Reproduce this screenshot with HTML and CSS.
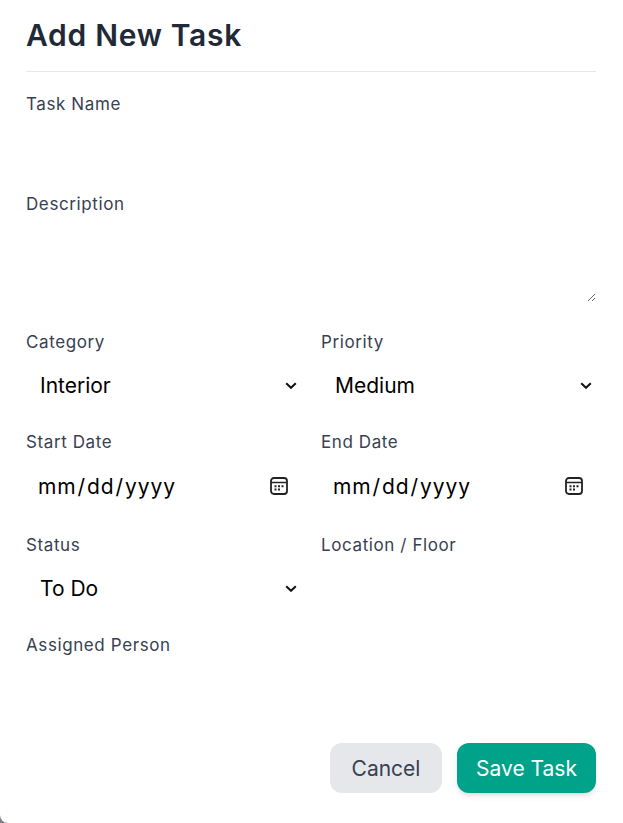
FILE: index.html
```html
<!DOCTYPE html>
<html lang="en">
<head>
<meta charset="utf-8">
<title>Add New Task</title>
<link rel="stylesheet" href="styles.css">
</head>
<body>
<form class="modal">
  <h2 class="title">Add New Task</h2>
  <div class="stack">
    <div class="field">
      <label class="label" for="name">Task Name</label>
      <input class="control" id="name" type="text">
    </div>
    <div class="field">
      <label class="label" for="desc">Description</label>
      <textarea class="control area" id="desc"></textarea>
    </div>
  </div>
  <div class="grid">
    <div class="field">
      <label class="label" for="cat">Category</label>
      <div class="wrap">
        <select class="control select" id="cat"><option>Interior</option></select>
        <svg class="chevron" viewBox="0 0 12 7" width="12" height="7" aria-hidden="true"><path d="M1.2 1.2 6 5.8l4.800-4.600" fill="none" stroke="#111" stroke-width="2"/></svg>
      </div>
    </div>
    <div class="field">
      <label class="label" for="pri">Priority</label>
      <div class="wrap">
        <select class="control select" id="pri"><option>Medium</option></select>
        <svg class="chevron" viewBox="0 0 12 7" width="12" height="7" aria-hidden="true"><path d="M1.2 1.2 6 5.8l4.800-4.600" fill="none" stroke="#111" stroke-width="2"/></svg>
      </div>
    </div>
    <div class="field">
      <label class="label" for="start">Start Date</label>
      <div class="wrap">
        <input class="control date" id="start" type="date">
        <svg class="calendar" viewBox="0 0 18 18" width="18" height="18" aria-hidden="true"><rect x="1" y="1" width="16" height="16" rx="3" fill="none" stroke="#222" stroke-width="1.8"/><path d="M1 5.500h16" stroke="#222" stroke-width="1.500"/><path d="M4.500 8.200h2v2h-2zM8 8.200h2v2H8zM11.500 8.200h2v2h-2zM4.500 11.500h2v2h-2zM8 11.500h2v2H8z" fill="#222"/></svg>
      </div>
    </div>
    <div class="field">
      <label class="label" for="end">End Date</label>
      <div class="wrap">
        <input class="control date" id="end" type="date">
        <svg class="calendar" viewBox="0 0 18 18" width="18" height="18" aria-hidden="true"><rect x="1" y="1" width="16" height="16" rx="3" fill="none" stroke="#222" stroke-width="1.8"/><path d="M1 5.500h16" stroke="#222" stroke-width="1.500"/><path d="M4.500 8.200h2v2h-2zM8 8.200h2v2H8zM11.500 8.200h2v2h-2zM4.500 11.500h2v2h-2zM8 11.500h2v2H8z" fill="#222"/></svg>
      </div>
    </div>
    <div class="field">
      <label class="label" for="status">Status</label>
      <div class="wrap">
        <select class="control select" id="status"><option>To Do</option></select>
        <svg class="chevron" viewBox="0 0 12 7" width="12" height="7" aria-hidden="true"><path d="M1.2 1.2 6 5.8l4.800-4.600" fill="none" stroke="#111" stroke-width="2"/></svg>
      </div>
    </div>
    <div class="field">
      <label class="label" for="loc">Location / Floor</label>
      <input class="control" id="loc" type="text">
    </div>
  </div>
  <div class="field person">
    <label class="label" for="person">Assigned Person</label>
    <input class="control" id="person" type="text">
  </div>
  <div class="actions">
    <button class="btn btn-cancel" type="button">Cancel</button>
    <button class="btn btn-save" type="submit">Save Task</button>
  </div>
</form>
</body>
</html>
```
FILE: styles.css
```css
* { box-sizing: border-box; }
html, body { height: 100%; }
body {
  margin: 0;
  background: #7f7f8a;
  font-family: Inter, "Open Sans", sans-serif;
  overflow: hidden;
}
.modal {
  height: 823px;
  background: #fff;
  border-radius: 0 0 0 8px;
  padding: 0 27px 0 26px;
}
.title {
  margin: 0;
  height: 72px;
  padding-top: 16px;
  border-bottom: 1px solid #e5e7eb;
  font-size: 30px;
  line-height: 38px;
  font-weight: 600;
  letter-spacing: .7px;
  color: #1f2937;
}
.stack {
  display: flex;
  flex-direction: column;
  gap: 20px;
  margin-top: 20px;
}
.field { display: flex; flex-direction: column; }
.label {
  font-size: 17px;
  line-height: 24px;
  letter-spacing: .6px;
  color: #374151;
}
.wrap { position: relative; }
.control {
  display: block;
  border: 0;
  outline: 0;
  background: #fff;
  width: 100%;
  height: 50px;
  margin-top: 6px;
  padding: 0 11px;
  font-family: inherit;
  font-size: 21px;
  color: #000;
}
.area { height: 80px; resize: vertical; }
.select {
  appearance: none;
  padding-left: 14px;
}
.date {
  height: 53px;
  letter-spacing: .9px;
}
.date::-webkit-calendar-picker-indicator { opacity: 0; }
.chevron {
  position: absolute;
  right: 4px;
  top: 28px;
  pointer-events: none;
}
.calendar {
  position: absolute;
  right: 13px;
  top: 23px;
  pointer-events: none;
}
.grid {
  display: grid;
  grid-template-columns: 275px 275px;
  column-gap: 20px;
  row-gap: 20px;
  margin-top: 28px;
}
.person { margin-top: 20px; }
.actions {
  display: flex;
  justify-content: flex-end;
  gap: 15px;
  margin-top: 30px;
}
.btn {
  height: 50px;
  border: 0;
  border-radius: 12px;
  padding: 0;
  font-family: inherit;
  font-size: 21px;
}
.btn-cancel { width: 112px; background: #e5e7eb; color: #374151; }
.btn-save {
  width: 139px;
  background: #00a389;
  color: #fff;
  box-shadow: 0 4px 6px -1px rgba(0,0,0,.1), 0 2px 4px -2px rgba(0,0,0,.1);
}
```
